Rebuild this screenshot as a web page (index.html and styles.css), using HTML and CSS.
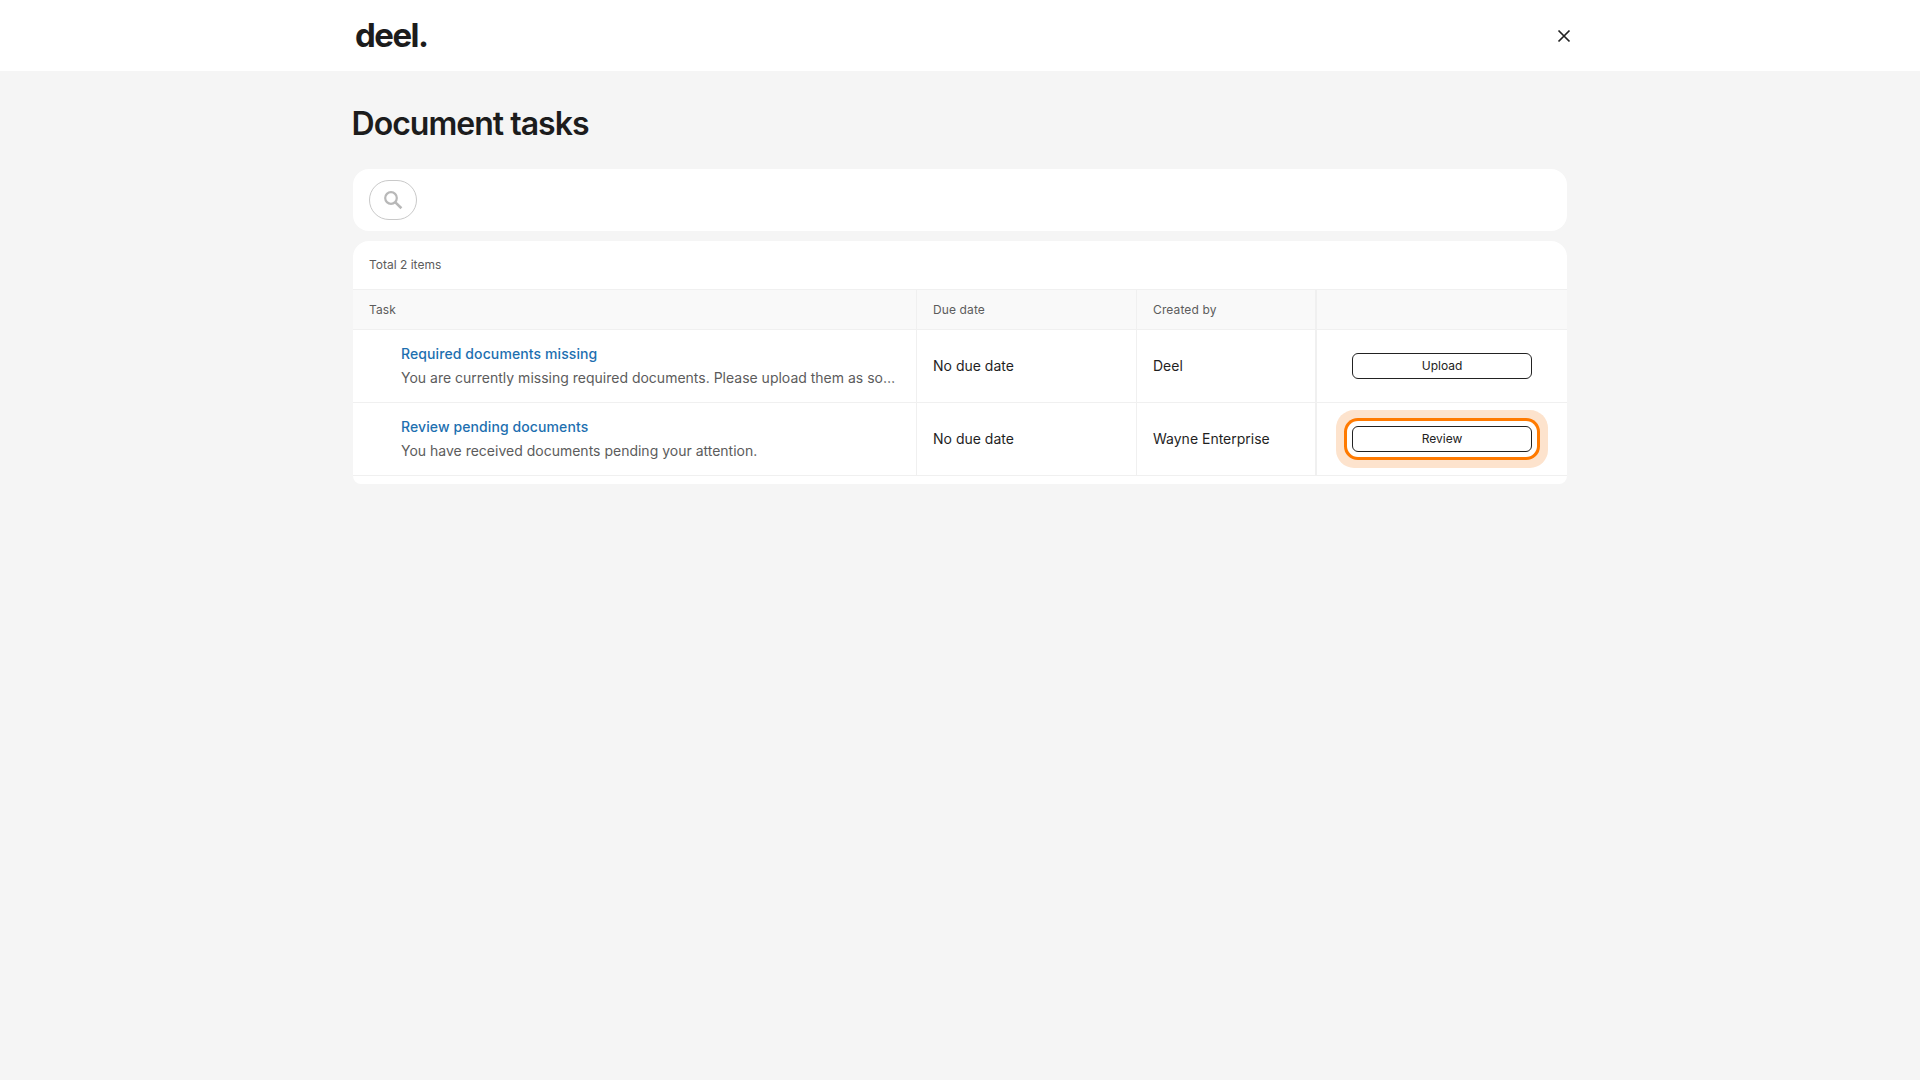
FILE: index.html
```html
<!DOCTYPE html>
<html lang="en">
<head>
<meta charset="utf-8">
<title>Document tasks</title>
<link rel="stylesheet" href="styles.css">
</head>
<body>
<header class="topbar">
  <div class="topbar-inner">
    <span class="logo">deel.</span>
    <button class="close" aria-label="Close">
      <svg width="14" height="14" viewBox="0 0 14 14"><path d="M1.5 1.5l11 11M12.5 1.5l-11 11" stroke="#222" stroke-width="1.7" fill="none"/></svg>
    </button>
  </div>
</header>
<main class="page">
  <h1 class="title">Document tasks</h1>
  <section class="card search-card">
    <span class="search-btn">
      <svg width="20" height="20" viewBox="0 0 20 20"><circle cx="8" cy="8" r="5.8" stroke="#b8b8b8" stroke-width="2.2" fill="none"/><path d="M12.4 12.4l6 5.8" stroke="#b8b8b8" stroke-width="2.6" fill="none"/></svg>
    </span>
  </section>
  <section class="card table-card">
    <div class="total">Total 2 items</div>
    <div class="grid head">
      <div class="cell">Task</div>
      <div class="cell">Due date</div>
      <div class="cell">Created by</div>
      <div class="cell action"></div>
    </div>
    <div class="grid row">
      <div class="cell task">
        <a class="task-title">Required documents missing</a>
        <p class="task-desc">You are currently missing required documents. Please upload them as so…</p>
      </div>
      <div class="cell">No due date</div>
      <div class="cell">Deel</div>
      <div class="cell action"><button class="btn">Upload</button></div>
    </div>
    <div class="grid row">
      <div class="cell task">
        <a class="task-title">Review pending documents</a>
        <p class="task-desc">You have received documents pending your attention.</p>
      </div>
      <div class="cell">No due date</div>
      <div class="cell">Wayne Enterprise</div>
      <div class="cell action"><button class="btn btn-focus">Review</button></div>
    </div>
  </section>
</main>
</body>
</html>
```
FILE: styles.css
```css
* { box-sizing: border-box; }
html, body { margin: 0; height: 100%; }
body {
  background: #f5f5f5;
  font-family: Inter, "Liberation Sans", sans-serif;
  color: #1f1f1f;
  font-size: 14px;
}
.topbar { background: #fff; height: 71px; }
.topbar-inner {
  width: 1214px;
  margin: 0 auto;
  height: 100%;
  display: flex;
  align-items: center;
  justify-content: space-between;
  padding-left: 2px;
}
.logo {
  font-size: 33px;
  font-weight: 700;
  letter-spacing: -1.5px;
  color: #1c1c1c;
  line-height: 1;
}
.close {
  background: none;
  border: 0;
  padding: 0;
  width: 14px;
  height: 14px;
  margin-right: -4px;
  display: flex;
}
.page { width: 1214px; margin: 0 auto; }
.title {
  margin: 0 0 0 -1.5px;
  padding-top: 33px;
  height: 98px;
  font-size: 32px;
  line-height: 40px;
  font-weight: 600;
  letter-spacing: -0.98px;
  color: #1c1c1c;
}
.card { background: #fff; }
.search-card {
  height: 62px;
  border-radius: 16px;
  padding: 11px 16px;
  margin-bottom: 10px;
}
.search-btn {
  width: 48px;
  height: 40px;
  border: 1px solid #c9c9c9;
  border-radius: 20px;
  display: flex;
  align-items: center;
  justify-content: center;
}
.table-card {
  height: 243px;
  border-radius: 16px 16px 8px 8px;
  overflow: hidden;
}
.total {
  height: 48px;
  padding: 0 16px 2px;
  display: flex;
  align-items: center;
  font-size: 12px;
  color: #5c5c5c;
}
.grid {
  display: grid;
  grid-template-columns: 564px 220px 180px 250px;
}
.head {
  height: 41px;
  background: #f9f9f9;
  border-top: 1px solid #f0f0f0;
  border-bottom: 1px solid #f0f0f0;
  font-size: 12px;
  letter-spacing: 0.12px;
  color: #5c5c5c;
}
.row { height: 73px; border-bottom: 1px solid #f0f0f0; }
.cell {
  display: flex;
  align-items: center;
  padding: 0 16px;
  border-right: 1px solid #f0f0f0;
  min-width: 0;
}
.row .cell { padding-bottom: 1px; }
.cell:nth-child(3) { border-right-width: 2px; }
.action { border-right: 0; justify-content: center; }
.row .task {
  flex-direction: column;
  align-items: flex-start;
  justify-content: center;
  padding: 0 20px 0 48px;
  gap: 4px;
}
.task-title {
  color: #1d6fb0;
  font-weight: 500;
  line-height: 20px;
  letter-spacing: 0.1px;
}
.task-desc {
  margin: 0;
  color: #5c5c5c;
  line-height: 20px;
  white-space: nowrap;
}
.btn {
  width: 180px;
  height: 26px;
  background: #fff;
  border: 1px solid #222;
  border-radius: 6px;
  font-family: inherit;
  font-size: 12px;
  font-weight: 400;
  color: #222;
  padding: 0;
}
.btn-focus {
  box-shadow: 0 0 0 5px #fff, 0 0 0 8px #ff7a00, 0 0 0 16px #fde3cd;
}
```
